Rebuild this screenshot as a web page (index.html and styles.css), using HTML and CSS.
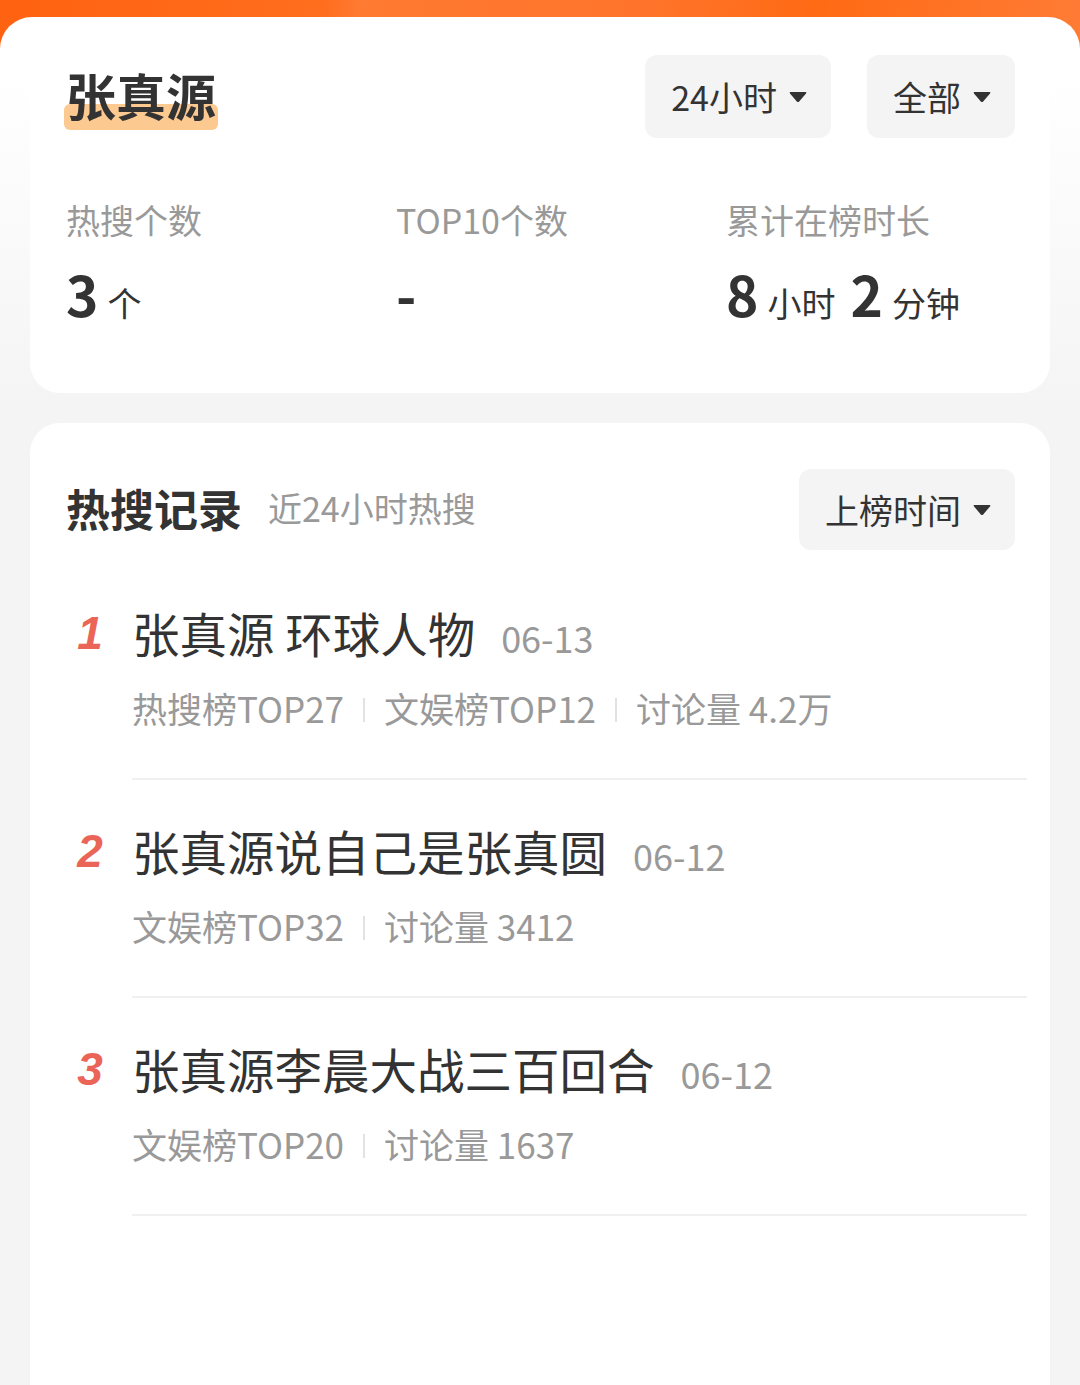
FILE: index.html
```html
<!DOCTYPE html>
<html lang="zh-CN">
<head>
<meta charset="UTF-8" />
<meta name="viewport" content="width=device-width, initial-scale=1" />
<title>张真源 热搜记录</title>
<link rel="stylesheet" href="styles.css">
</head>
<body>

<div class="banner"></div>

<div class="sheet">
  <!-- 概览 -->
  <section class="card summary">
    <div class="summary-head">
      <h1 class="name"><span>张真源</span></h1>
      <div class="filters">
        <button class="drop">24小时
          <svg width="18" height="12" viewBox="0 0 18 12"><path d="M1.5 1 H16.5 Q18 1 17 2.4 L10.2 10.4 Q9 11.6 7.8 10.4 L1 2.4 Q0 1 1.5 1 Z" /></svg>
        </button>
        <button class="drop">全部
          <svg width="18" height="12" viewBox="0 0 18 12"><path d="M1.5 1 H16.5 Q18 1 17 2.4 L10.2 10.4 Q9 11.6 7.8 10.4 L1 2.4 Q0 1 1.5 1 Z" /></svg>
        </button>
      </div>
    </div>

    <div class="stats">
      <div class="stat">
        <div class="stat-label">热搜个数</div>
        <div class="stat-value"><b>3</b><small>个</small></div>
      </div>
      <div class="stat">
        <div class="stat-label">TOP10个数</div>
        <div class="stat-value"><b>-</b></div>
      </div>
      <div class="stat">
        <div class="stat-label">累计在榜时长</div>
        <div class="stat-value"><b>8</b><small>小时</small><b>2</b><small>分钟</small></div>
      </div>
    </div>
  </section>

  <!-- 热搜记录 -->
  <section class="card records">
    <div class="records-head">
      <h2>热搜记录</h2>
      <span class="sub">近24小时热搜</span>
      <button class="drop sort">上榜时间
        <svg width="18" height="12" viewBox="0 0 18 12"><path d="M1.5 1 H16.5 Q18 1 17 2.4 L10.2 10.4 Q9 11.6 7.8 10.4 L1 2.4 Q0 1 1.5 1 Z" /></svg>
      </button>
    </div>

    <ul class="list">
      <li class="item">
        <span class="rank">1</span>
        <div class="item-body">
          <div class="item-title">张真源 环球人物<span class="date">06-13</span></div>
          <div class="item-meta">
            <span>热搜榜TOP27</span><i></i><span>文娱榜TOP12</span><i></i><span>讨论量 4.2万</span>
          </div>
        </div>
      </li>
      <li class="item">
        <span class="rank">2</span>
        <div class="item-body">
          <div class="item-title">张真源说自己是张真圆<span class="date">06-12</span></div>
          <div class="item-meta">
            <span>文娱榜TOP32</span><i></i><span>讨论量 3412</span>
          </div>
        </div>
      </li>
      <li class="item">
        <span class="rank">3</span>
        <div class="item-body">
          <div class="item-title">张真源李晨大战三百回合<span class="date">06-12</span></div>
          <div class="item-meta">
            <span>文娱榜TOP20</span><i></i><span>讨论量 1637</span>
          </div>
        </div>
      </li>
    </ul>
  </section>
</div>

</body>
</html>
```

FILE: styles.css
```css
body, html {
  margin: 0; padding: 0;
  background-color: #f4f4f4;
  font-family: 'Noto Sans CJK SC', 'Noto Sans', sans-serif;
  color: #333;
  overflow: hidden;
}

/* 顶部橙色条 */
.banner {
  height: 60px;
  background: linear-gradient(100deg, #ff6210 0%, #ff6e1e 30%, #ff7a32 33%, #ff742a 60%, #ff6a14 75%, #ff7c36 100%);
}

.sheet {
  margin-top: -43px;
  padding: 13px 30px 0;
  border-radius: 32px 32px 0 0;
  background: linear-gradient(#fff 60px, #f4f4f4 400px);
}

.card {
  background: #fff;
  border-radius: 30px;
}

button.drop {
  display: flex;
  align-items: center;
  gap: 12px;
  height: 83px;
  padding: 0 24px 0 26px;
  border: none;
  border-radius: 12px;
  background: #f4f4f4;
  font-family: inherit;
  font-size: 34px;
  color: #333;
}
button.drop svg {
  fill: #333;
}

/* 概览卡片 */
.summary {
  padding: 25px 35px 0 36px;
  height: 363px;
  box-sizing: border-box;
}
.summary-head {
  display: flex;
  justify-content: space-between;
  align-items: center;
}
.name {
  margin: -6px 0 0;
  font-size: 50px;
  font-weight: bold;
  line-height: 1;
}
.name span {
  position: relative;
  z-index: 0;
}
.name span::after {
  content: '';
  position: absolute;
  left: -2px; right: -2px;
  bottom: 0;
  height: 26px;
  border-radius: 6px;
  background: #fcc991;
  z-index: -1;
}
.filters {
  display: flex;
  gap: 36px;
}

.stats {
  display: grid;
  grid-template-columns: 330px 330px 1fr;
  margin-top: 58px;
}
.stat-label {
  font-size: 34px;
  color: #999;
  line-height: 48px;
}
.stat-value {
  margin-top: 21px;
  display: flex;
  align-items: baseline;
  line-height: 56px;
}
.stat-value b {
  font-size: 55px;
  font-weight: bold;
}
.stat-value small {
  font-size: 34px;
  margin: 0 15px 0 9px;
}

/* 热搜记录 */
.records {
  margin-top: 30px;
  padding: 46px 23px 220px 36px;
}
.records-head {
  display: flex;
  align-items: center;
  margin-right: 12px;
}
.records-head h2 {
  margin: -4px 0 0;
  font-size: 44px;
  font-weight: bold;
}
.records-head .sub {
  margin: -4px 0 0 26px;
  font-size: 34px;
  color: #999;
}
.sort {
  margin-left: auto;
  height: 81px !important;
}

.list {
  list-style: none;
  margin: 0;
  padding: 0;
}
.item {
  display: flex;
  padding-top: 39px;
}
.item:first-child {
  padding-top: 51px;
}
.rank {
  width: 48px;
  font-size: 46px;
  font-weight: bold;
  font-style: italic;
  color: #ea6558;
  line-height: 64px;
  text-align: center;
  font-family: 'Liberation Sans', 'Noto Sans', sans-serif;
}
.item-body {
  flex: 1;
  margin-left: 18px;
  padding-bottom: 46px;
  border-bottom: 2px solid #f0f0f0;
}
.item-title {
  font-size: 47.5px;
  line-height: 64px;
}
.date {
  margin-left: 26px;
  font-size: 36px;
  line-height: 1;
  color: #999;
}
.item-meta {
  margin-top: 19px;
  font-size: 35px;
  line-height: 48px;
  color: #999;
  display: flex;
  align-items: center;
}
.item-meta i {
  width: 2px;
  height: 24px;
  margin: 4px 19px 0;
  background: #e2e2e2;
}
```
